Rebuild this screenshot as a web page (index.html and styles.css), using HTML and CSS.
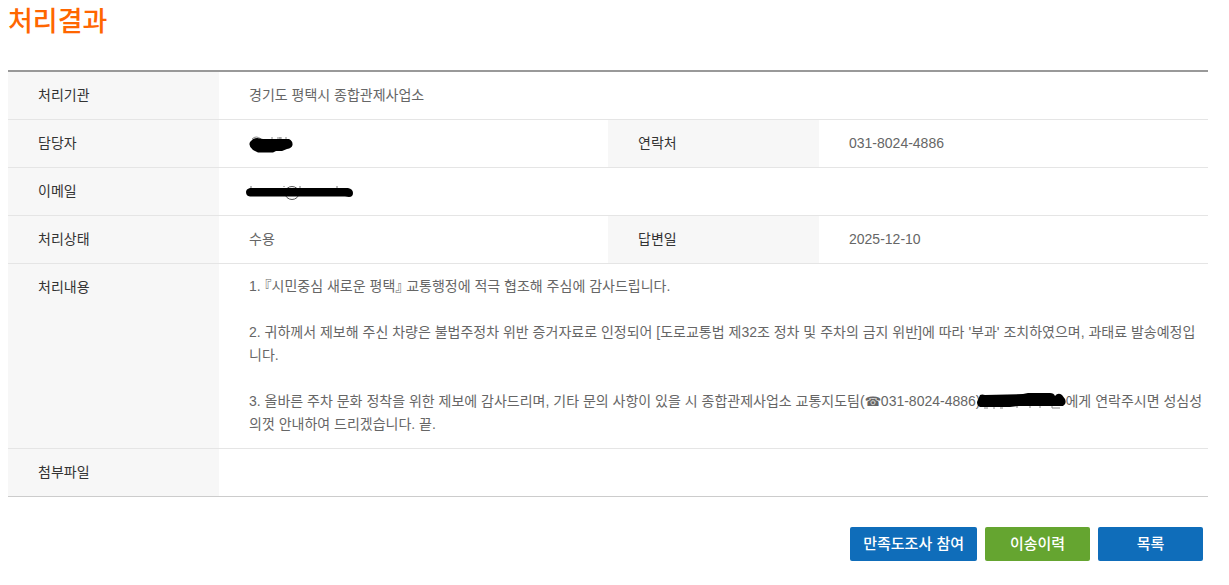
FILE: index.html
```html
<!DOCTYPE html>
<html lang="ko">
<head>
<meta charset="utf-8">
<title>처리결과</title>
<link rel="stylesheet" href="styles.css">
</head>
<body>
<main class="page">
  <h1 class="title">처리결과</h1>
  <table class="result">
    <colgroup><col class="col-label"><col><col class="col-label"><col></colgroup>
    <tbody>
      <tr><th scope="row">처리기관</th><td colspan="3">경기도 평택시 종합관제사업소</td></tr>
      <tr>
        <th scope="row">담당자</th>
        <td><svg class="mask mask-name" width="46" height="20" viewBox="0 0 46 20" role="img" aria-label="비공개">
          <path d="M3 5Q7 1 12 5M23 3v3M28 4h5M31 3v3M37 3v3" fill="none" stroke="#888"/>
          <path d="M2 7Q4 4 8 4L14 5H40Q44 7 43.500 11 43 14 38 15L33 17 27 17 24 18.500H9L4 16Q-1 12 1 8Z"/>
        </svg></td>
        <th scope="row">연락처</th><td>031-8024-4886</td>
      </tr>
      <tr>
        <th scope="row">이메일</th>
        <td colspan="3"><svg class="mask mask-mail" width="109" height="20" viewBox="0 0 109 20" role="img" aria-label="비공개">
          <path d="M5 4v4M38 4v1M54 4v5M91 4v5" fill="none" stroke="#777"/>
          <ellipse cx="46" cy="11" rx="7" ry="6.5" fill="none" stroke="#555"/>
          <path d="M4 6H102Q107 7 107 11 107 15 103 15L99 14.500H4Q0 14 0 10 0 7 4 6Z"/>
        </svg></td>
      </tr>
      <tr><th scope="row">처리상태</th><td>수용</td><th scope="row">답변일</th><td>2025-12-10</td></tr>
      <tr>
        <th scope="row">처리내용</th>
        <td class="content" colspan="3">1. 『시민중심 새로운 평택』 교통행정에 적극 협조해 주심에 감사드립니다.<br><br>2. 귀하께서 제보해 주신 차량은 불법주정차 위반 증거자료로 인정되어 [도로교통법 제32조 정차 및 주차의 금지 위반]에 따라 '부과' 조치하였으며, 과태료 발송예정입니다.<br><br>3. 올바른 주차 문화 정착을 위한 제보에 감사드리며, 기타 문의 사항이 있을 시 종합관제사업소 교통지도팀(<span class="phone">☎</span>031-8024-4886)<svg class="mask mask-inline" width="85" height="20" viewBox="4 0 85 20" role="img" aria-label="비공개">
          <path d="M8 16h4M18 15v2M24 16h3M41 14v2M54 14v2M64 14v2M76 14v2h8" fill="none" stroke="#888"/>
          <path d="M4 3Q6 2 9 3L47 2 52 1H74Q78 1 79 4 82 0 86 3L89 7Q91 12 87 14H43L34 15H4Q1 14 1 10Z"/>
        </svg>에게 연락주시면 성심성의껏 안내하여 드리겠습니다. 끝.</td>
      </tr>
      <tr><th scope="row">첨부파일</th><td colspan="3"></td></tr>
    </tbody>
  </table>
  <div class="actions">
    <button type="button" class="btn">만족도조사 참여</button>
    <button type="button" class="btn btn-green">이송이력</button>
    <button type="button" class="btn">목록</button>
  </div>
</main>
</body>
</html>
```
FILE: styles.css
```css
body {
  margin: 0;
  background: #fff;
  color: #666;
  font: 14px/23px "Liberation Sans", "Noto Sans CJK KR", sans-serif;
}
.page {
  padding: 0 21px 24px 8px;
}
.title {
  margin: 0 0 30px;
  color: #f60;
  font-family: "Noto Sans CJK KR", sans-serif;
  font-size: 27px;
  font-weight: 500;
  line-height: 40px;
}
.result {
  width: 100%;
  table-layout: fixed;
  border-collapse: separate;
  border-spacing: 0;
  border-top: 2px solid #999;
  border-bottom: 1px solid #ccc;
}
.col-label {
  width: 211px;
}
.result th,
.result td {
  height: 23px;
  padding: 12px 0 12px 30px;
  border-bottom: 1px solid #e5e5e5;
  text-align: left;
  vertical-align: top;
}
.result th {
  background: #f7f7f7;
  color: #333;
  font-weight: 400;
}
.result tr:last-child th,
.result tr:last-child td {
  border-bottom: 0;
}
.result .content {
  padding: 11px 1px 12px 30px;
  font-feature-settings: "halt";
}
.phone {
  font-family: "DejaVu Sans", sans-serif;
  font-size: 13px;
  line-height: 1;
}
.mask {
  overflow: visible;
  fill: #000;
  vertical-align: middle;
}
.mask-mail {
  margin-left: -3px;
}
.mask-inline {
  margin: -2px 0;
}
.actions {
  display: flex;
  justify-content: flex-end;
  gap: 8px;
  padding: 30px 5px 0 0;
}
.btn {
  min-width: 105px;
  height: 34px;
  padding: 0 13px 2px;
  border: 0;
  border-radius: 2px;
  background: #0f6dba;
  color: #fff;
  font: 500 15px/32px "Noto Sans CJK KR", sans-serif;
  cursor: pointer;
}
.btn-green {
  background: #65a530;
}
```
